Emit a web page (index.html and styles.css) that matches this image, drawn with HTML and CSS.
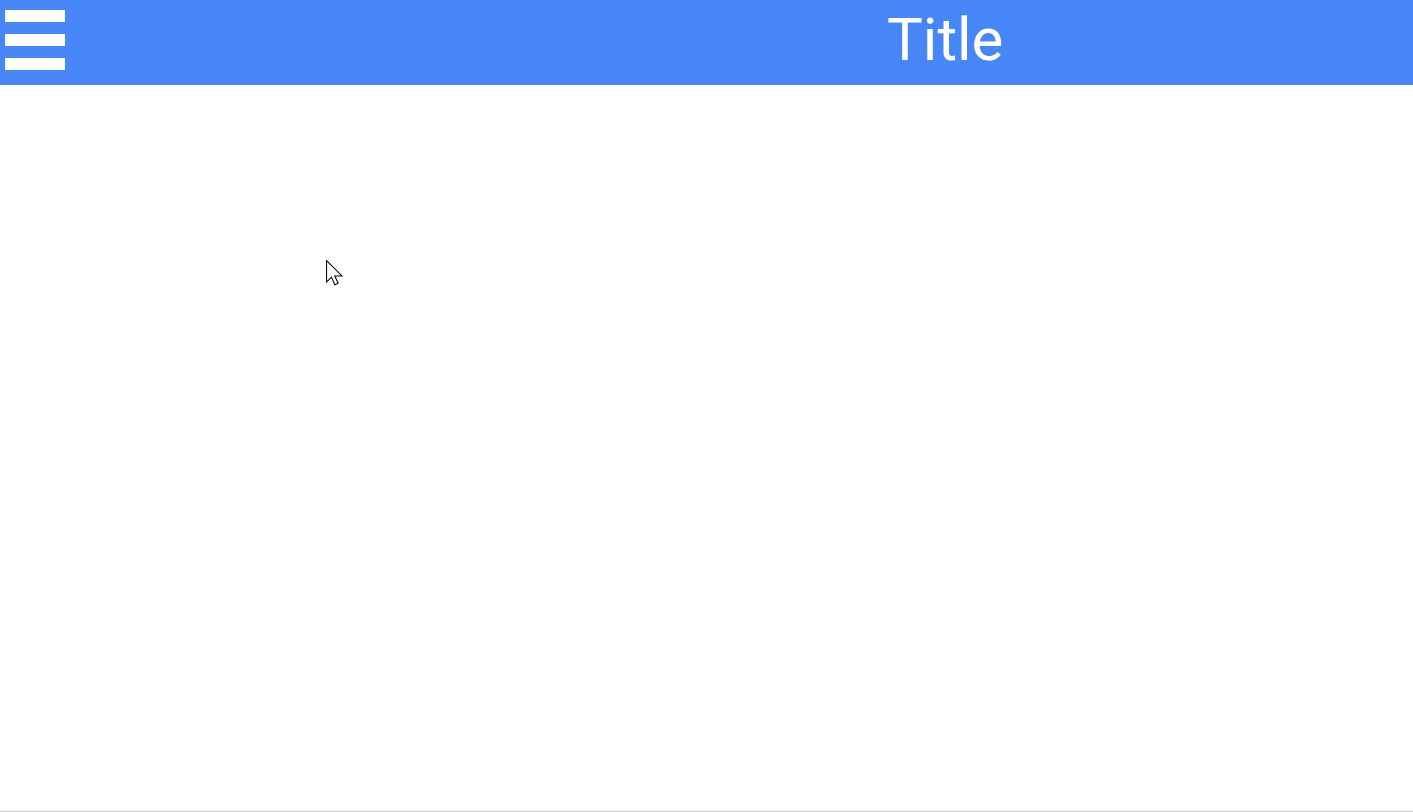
FILE: index.html
```html
<!DOCTYPE html>
<html>
<head>
<meta charset="utf-8">
<link rel="stylesheet" href="styles.css">
</head>
<body>
<header class="appbar">
  <div class="menu" aria-label="Menu">
    <span class="bar"></span>
    <span class="bar"></span>
    <span class="bar"></span>
  </div>
  <h1 class="title">Title</h1>
</header>
<main class="content"></main>
<svg class="cursor" width="22" height="33" viewBox="0 0 20 30">
  <path d="M0.5 0.5 L0.5 20 L5 15.5 L8 22.5 L11 21.2 L8 14.5 L14.5 14.5 Z" fill="#fff" stroke="#000" stroke-width="0.95" stroke-linejoin="miter"/>
</svg>
</body>
</html>
```
FILE: styles.css
```css
html, body {
  margin: 0;
  padding: 0;
  background: #fff;
  font-family: Roboto, "Noto Sans", sans-serif;
}
.appbar {
  height: 85px;
  background: #4786f6;
  display: flex;
  align-items: flex-start;
}
.menu {
  display: flex;
  flex-direction: column;
  gap: 12px;
  margin: 10px 0 0 5px;
}
.bar {
  display: block;
  width: 60px;
  height: 12px;
  background: #fff;
}
.title {
  margin: 10px 0 0 822px;
  color: #fff;
  font-weight: 400;
  font-size: 60px;
  line-height: 1;
}
.content {
  height: 726px;
  border-bottom: 1px solid #cccccc;
}
.cursor {
  position: absolute;
  left: 326px;
  top: 260px;
}
```
